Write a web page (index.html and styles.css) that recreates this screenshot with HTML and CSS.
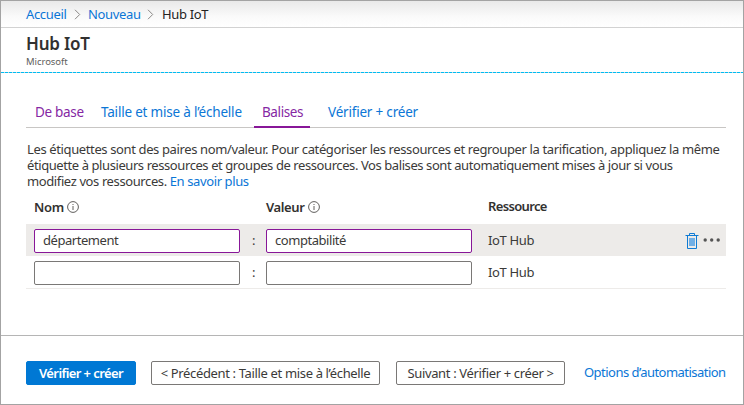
FILE: index.html
```
<!DOCTYPE html>
<html lang="fr">
<head>
<meta charset="utf-8">
<title>Hub IoT</title>
<link rel="stylesheet" href="styles.css">
</head>
<body>
<div class="frame">
  <nav class="crumbs">
    <a class="crumb-home"><span>Accueil</span></a>
    <svg class="chevron" viewBox="0 0 7 11"><path d="M1 .8 5.7 5.5 1 10.2"/></svg>
    <a class="crumb-new"><span>Nouveau</span></a>
    <svg class="chevron" viewBox="0 0 7 11"><path d="M1 .8 5.7 5.5 1 10.2"/></svg>
    <span class="crumb-here">Hub IoT</span>
  </nav>
  <header class="heading">
    <h1>Hub IoT</h1>
    <p>Microsoft</p>
  </header>
  <svg class="dashes" viewBox="0 0 742 1"><path class="under" d="M0 .5H742"/><path class="over" d="M0 .5H742"/></svg>
  <main>
    <div class="tabs">
      <a class="tab tab-basics visited"><span>De base</span></a>
      <a class="tab tab-size"><span>Taille et mise à l’échelle</span></a>
      <a class="tab tab-tags visited active"><span>Balises</span></a>
      <a class="tab tab-review"><span>Vérifier + créer</span></a>
    </div>
    <div class="intro">
      <p class="l1">Les étiquettes sont des paires nom/valeur. Pour catégoriser les ressources et regrouper la tarification, appliquez la même</p>
      <p class="l2">étiquette à plusieurs ressources et groupes de ressources. Vos balises sont automatiquement mises à jour si vous</p>
      <p class="l3">modifiez vos ressources. <a>En savoir plus</a></p>
    </div>
    <div class="row head">
      <div class="label"><b class="h-name">Nom</b><svg class="info" viewBox="0 0 12 12"><circle cx="6" cy="6" r="5.4"/><path d="M6 5v4M6 3v1"/></svg></div>
      <span></span>
      <div class="label"><b class="h-value">Valeur</b><svg class="info" viewBox="0 0 12 12"><circle cx="6" cy="6" r="5.4"/><path d="M6 5v4M6 3v1"/></svg></div>
      <b class="h-res">Ressource</b>
    </div>
    <div class="row selected">
      <div class="field filled"><span>département</span></div>
      <span class="colon">:</span>
      <div class="field filled"><span>comptabilité</span></div>
      <span class="resource">IoT Hub</span>
      <svg class="trash" viewBox="0 0 14 16"><path class="line" d="M.5 2.5h13M4.5 2.5v-2h5v2M2.5 2.5v13h9v-13"/><path class="fill" d="M4 5h6v8H4z"/></svg>
      <svg class="more" viewBox="0 0 18 4"><circle cx="2.2" cy="2" r="1.7"/><circle cx="8.7" cy="2" r="1.7"/><circle cx="15.2" cy="2" r="1.7"/></svg>
    </div>
    <div class="row last">
      <div class="field"></div>
      <span class="colon">:</span>
      <div class="field"></div>
      <span class="resource">IoT Hub</span>
    </div>
  </main>
  <footer>
    <div class="btn primary"><span>Vérifier + créer</span></div>
    <div class="btn previous"><span>&lt; Précédent : Taille et mise à l’échelle</span></div>
    <div class="btn next"><span>Suivant : Vérifier + créer &gt;</span></div>
    <a class="auto"><span>Options d’automatisation</span></a>
  </footer>
</div>
</body>
</html>
```
FILE: styles.css
```
* { box-sizing: border-box; }
body {
  margin: 0;
  font: 13px/16px "Noto Sans", "Open Sans", sans-serif;
  letter-spacing: -0.35px;
  color: #3b3a39;
  background: #fff;
}
h1, p { margin: 0; }
a { color: #0b76d6; white-space: nowrap; }
b { font-weight: 600; color: #323130; }
svg { display: block; flex: none; }
.frame {
  display: flex;
  flex-direction: column;
  width: 744px;
  height: 405px;
  border: 1px solid #a3a3a3;
}
.crumbs {
  display: flex;
  align-items: center;
  height: 27px;
  padding-left: 25px;
  border-bottom: 1px solid #d2d2d2;
  background: linear-gradient(#e9e9e9, #fafafa 60%, #fff);
}
.crumb-home { width: 48px; }
.crumb-new { width: 59px; }
.crumb-here { padding-left: 1px; color: #252423; }
.chevron { width: 7px; height: 11px; margin-right: 7px; }
.chevron path { fill: none; stroke: #8a8886; stroke-width: 1; }
.heading { height: 44px; padding: 6px 0 0 25px; }
h1 { font-size: 17px; line-height: 20px; font-weight: 600; letter-spacing: -0.2px; color: #323130; }
.heading p { padding-top: 1px; font-size: 9.5px; line-height: 14px; letter-spacing: -0.05px; color: #605e5c; }
.dashes { width: 742px; height: 1px; }
.under { stroke: #c8d4da; }
.over { stroke: #00bcf2; stroke-dasharray: 3 1; }
main { height: 262px; padding: 28px 17px 0 25px; }
.tabs { display: flex; height: 27px; border-bottom: 1px solid #c8c6c4; }
.tab { height: 27px; padding-top: 3px; font-size: 13.5px; letter-spacing: -0.2px; }
.tab-basics { width: 66px; margin-left: 9px; letter-spacing: -0.3px; }
.tab-size { width: 153px; }
.tab-tags { width: 56px; padding-left: 8px; margin-right: 18px; letter-spacing: -0.4px; }
.visited { color: #8527a3; }
.active { border-bottom: 2px solid #881798; }
.intro { height: 62px; padding: 13px 0 0 1px; white-space: nowrap; }
.l1 { letter-spacing: -0.375px; }
.l2 { letter-spacing: -0.417px; }
.l3 { letter-spacing: -0.39px; }
.row {
  display: grid;
  grid-template-columns: 206px 26px 206px 196px 20px 18px;
  align-items: center;
  height: 32px;
  padding-left: 8px;
}
.row.head { height: 34px; }
.label { display: flex; align-items: center; }
.info { width: 12px; height: 12px; margin-left: 3px; }
.info circle, .info path { fill: none; stroke: #605e5c; stroke-width: 1; }
.h-value { margin-right: 1px; letter-spacing: -0.4px; }
.h-res { padding: 0 0 2px 16px; letter-spacing: -0.65px; }
.selected { background: #edebe9; }
.last { height: 33px; border-bottom: 1px solid #edebe9; }
.field {
  height: 24px;
  margin-top: 2px;
  padding: 2px 8px;
  border: 1px solid #7a7876;
  border-radius: 2px;
  background: #fff;
  letter-spacing: -0.45px;
}
.filled { border-color: #881798; }
.colon { padding-left: 12px; }
.resource { padding-left: 16px; }
.trash { width: 14px; height: 16px; margin: 1px 0 0 17px; }
.trash .line { fill: none; stroke: #0f7bd4; }
.trash .fill { fill: #71afe5; }
.more { width: 18px; height: 4px; margin-left: 15px; }
.more circle { fill: #555; }
footer {
  display: flex;
  flex: 1;
  align-items: flex-start;
  padding: 25px 0 0 25px;
  border-top: 1px solid #b5b5b5;
}
.btn {
  height: 24px;
  border: 1px solid #7a7876;
  border-radius: 2px;
  line-height: 22px;
  text-align: center;
  white-space: nowrap;
}
.primary { width: 110px; margin-right: 15px; border-color: #0078d4; background: #0078d4; color: #fff; font-weight: 600; letter-spacing: -0.6px; }
.previous { width: 229px; margin-right: 16px; }
.next { width: 169px; margin-right: 19px; }
.auto { line-height: 22px; letter-spacing: -0.53px; }
```
